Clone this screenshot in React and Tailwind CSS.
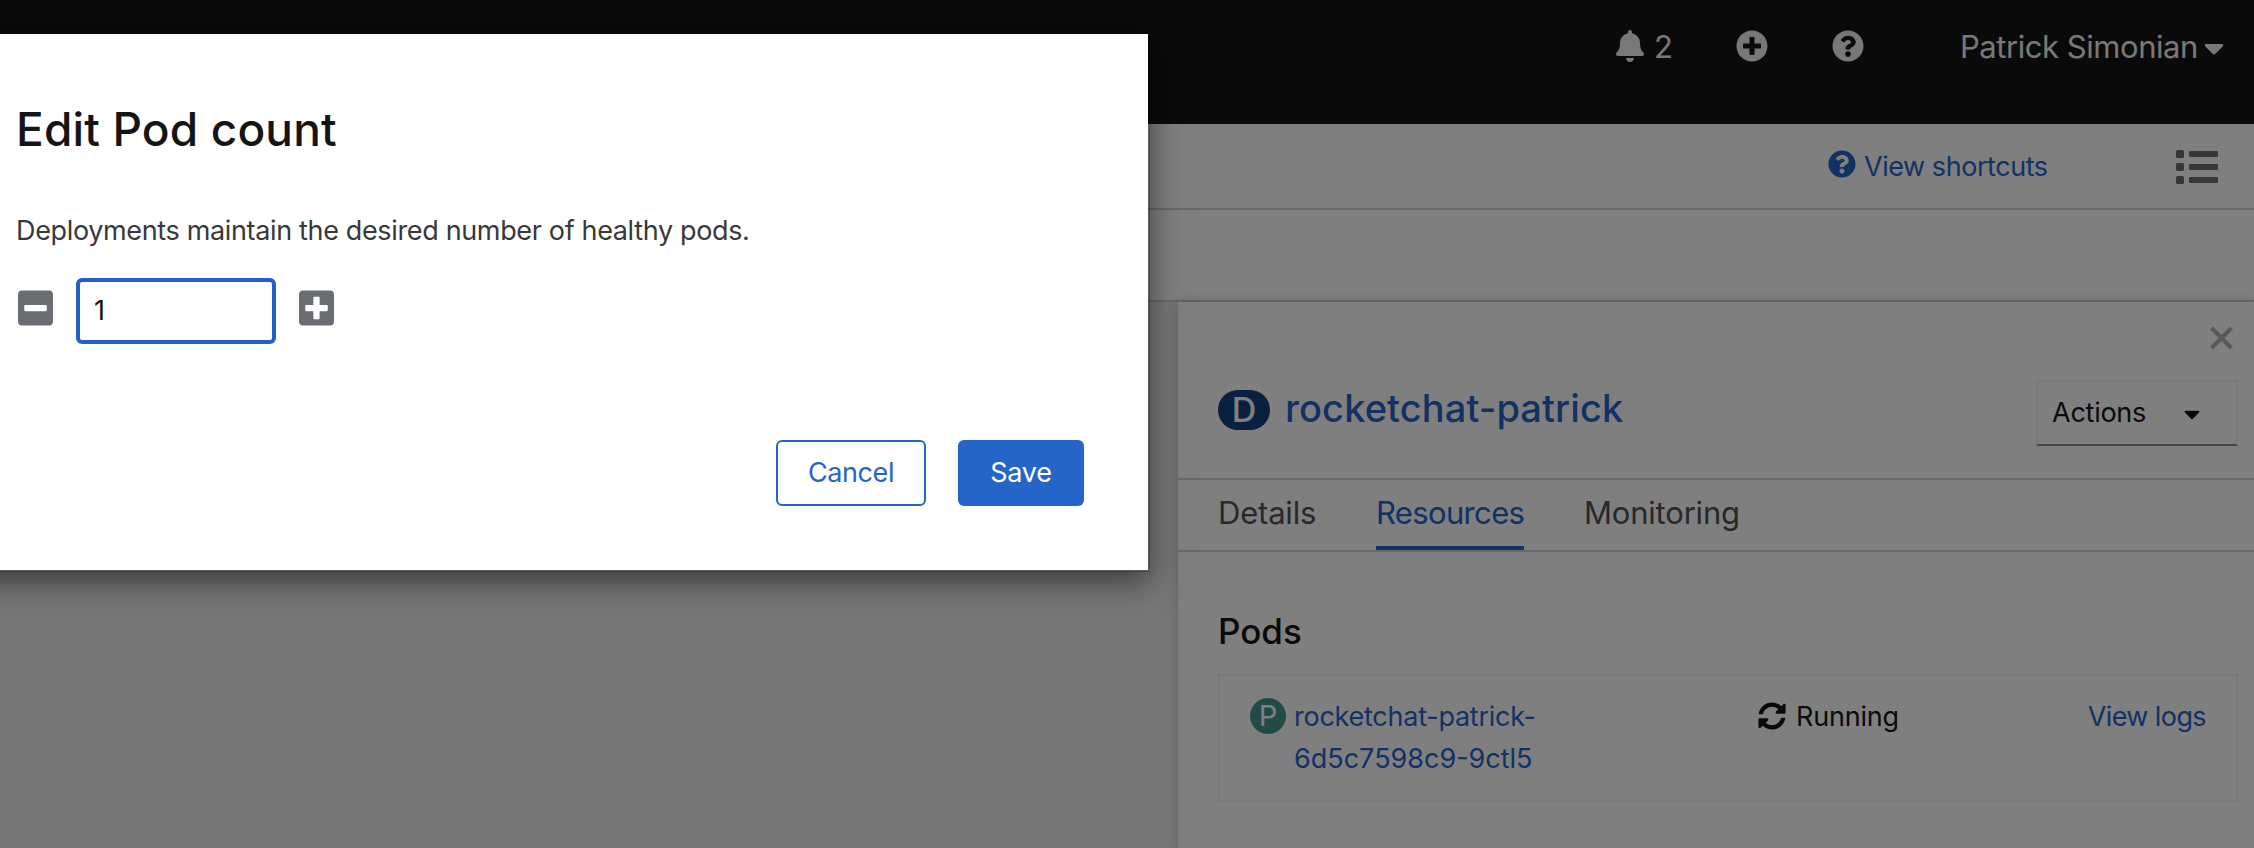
import { FaBell, FaPlusCircle, FaQuestionCircle, FaCaretDown, FaMinusSquare, FaPlusSquare, FaSyncAlt } from "react-icons/fa";

function TopBar() {
  return (
    <header className="flex h-[124px] justify-end bg-[#151515] pr-[30px] text-[31px] text-[#f0f0f0]">
      <div className="flex h-[92px] w-[120px] items-center">
        <FaBell className="mr-[10px] h-8 w-7" />
        <span className="pt-[2px]">2</span>
      </div>
      <div className="flex h-[92px] w-24 items-center">
        <FaPlusCircle className="h-8 w-8" />
      </div>
      <div className="flex h-[92px] w-[128px] items-center">
        <FaQuestionCircle className="h-8 w-8" />
      </div>
      <div className="flex h-[92px] items-center gap-[6px]">
        <span className="w-[238px] whitespace-nowrap pt-[2px] tracking-[-0.45px]">Patrick Simonian</span>
        <FaCaretDown className="mt-[3px] h-8 w-5" />
      </div>
    </header>
  );
}

function ListIcon() {
  return (
    <svg className="mt-[2px] h-[34px] w-[42px]" viewBox="0 0 42 34" fill="#6a6e73">
      {[0, 13, 26].map((y) => (
        <g key={y}>
          <rect x="0" y={y} width="8" height="8" rx="1.5" />
          <rect x="13" y={y + 1} width="29" height="6" rx="1" />
        </g>
      ))}
    </svg>
  );
}

function Toolbar() {
  return (
    <div className="flex h-[86px] items-center justify-end border-b-2 border-[#d2d2d2] bg-white pr-9 text-[27px] text-[#2665c8]">
      <FaQuestionCircle className="mb-1 mr-2 h-7 w-7" />
      <span className="w-[312px] whitespace-nowrap pt-[2px] tracking-[-0.45px]">View shortcuts</span>
      <ListIcon />
    </div>
  );
}

function SidePanel() {
  return (
    <aside className="flex w-[1076px] flex-col bg-white shadow-[0_0_12px_rgba(0,0,0,0.2)]">
      <div className="flex h-[178px] flex-col border-b-2 border-[#d2d2d2] pl-10 pr-4">
        <div className="flex h-[78px] justify-end pr-[5px] pt-6">
          <svg className="h-[24px] w-[23px]" viewBox="0 0 23 24" stroke="#b0b0b0" strokeWidth="4">
            <path d="M1.5 2 21.5 22M21.5 2 1.5 22" />
          </svg>
        </div>
        <div className="flex h-[66px] items-center justify-between">
          <div className="flex items-center gap-[15px] pb-[7px] text-[38px] font-medium text-[#2665c8]">
            <span className="flex h-10 w-[52px] items-center justify-center rounded-full bg-[#14407f] text-[34px] text-white">D</span>
            <span className="whitespace-nowrap pb-[2px] tracking-[0.1px]">rocketchat-patrick</span>
          </div>
          <button className="flex h-[66px] w-[202px] items-center border-2 border-[#f0f0f0] border-b-[#8a8d90] pl-[14px] text-[27px] text-[#151515]">
            <span className="w-[132px] text-left tracking-[-0.25px]">Actions</span>
            <FaCaretDown className="mt-[2px] h-[26px] w-4" />
          </button>
        </div>
      </div>
      <nav className="flex h-[72px] gap-[60px] border-b-2 border-[#d2d2d2] pl-10 text-[31px] leading-[66px] text-[#4f5255]">
        <span className="w-[98px] tracking-[-0.2px]">Details</span>
        <span className="h-[70px] w-[148px] border-b-4 border-[#2665c8] tracking-[-0.65px] text-[#2665c8]">Resources</span>
        <span className="tracking-[-0.2px]">Monitoring</span>
      </nav>
      <section className="flex flex-col pl-10 pr-4 pt-[54px] text-[#151515]">
        <h2 className="h-[68px] text-[35px] font-medium leading-[50px]">Pods</h2>
        <div className="flex h-[128px] border-2 border-[#f3f3f3] pl-[30px] pr-[30px] pt-[20px] text-[27px] leading-[42px]">
          <span className="mr-2 mt-[2px] flex h-9 w-9 items-center justify-center rounded-full bg-[#43978f] text-[29px] text-white">P</span>
          <a className="w-[464px] text-[#2665c8]">
            <span className="block tracking-[-0.25px]">rocketchat-patrick-</span>
            <span className="block">6d5c7598c9-9ctl5</span>
          </a>
          <FaSyncAlt className="mr-[10px] mt-[6px] h-7 w-7" />
          <span className="grow tracking-[-0.2px]">Running</span>
          <a className="tracking-[-0.6px] text-[#2665c8]">View logs</a>
        </div>
      </section>
    </aside>
  );
}

function Modal() {
  return (
    <div className="absolute -left-10 top-[32px] flex h-[540px] w-[1190px] flex-col border-2 border-black/20 bg-white bg-clip-padding pl-[54px] shadow-[0_10px_30px_rgba(0,0,0,0.5)]">
      <h1 className="mt-[64px] text-[46px] font-medium leading-[62px] tracking-[0.15px] text-[#151515]">Edit Pod count</h1>
      <p className="mt-[50px] text-[27px] leading-[42px] tracking-[-0.35px] text-[#393939]">Deployments maintain the desired number of healthy pods.</p>
      <div className="mt-[26px] flex h-[66px] items-center text-[#6a6e73]">
        <FaMinusSquare className="mb-[6px] ml-[2px] h-10 w-[35px]" />
        <div className="ml-[23px] mr-[23px] flex h-[66px] w-[200px] items-center rounded-md border-4 border-[#2260c8] pl-[14px] text-[27px] text-[#151515]">1</div>
        <FaPlusSquare className="mb-[6px] h-10 w-[35px]" />
      </div>
      <div className="mt-[96px] flex justify-end gap-8 pr-16 text-[27px]">
        <button className="h-[66px] w-[150px] rounded-md border-2 border-[#2665c8] tracking-[-0.4px] text-[#2665c8]">Cancel</button>
        <button className="h-[66px] w-[126px] rounded-md bg-[#2665c8] tracking-[-0.2px] text-white">Save</button>
      </div>
    </div>
  );
}

export default function App() {
  return (
    <div className="relative flex h-[848px] w-[2254px] flex-col overflow-hidden bg-[#eeeeee] font-['Inter',sans-serif]">
      <TopBar />
      <Toolbar />
      <div className="h-[92px] border-b-2 border-[#d2d2d2] bg-white" />
      <main className="flex grow justify-end">
        <SidePanel />
      </main>
      <div className="absolute inset-0 bg-black/50" />
      <Modal />
    </div>
  );
}
